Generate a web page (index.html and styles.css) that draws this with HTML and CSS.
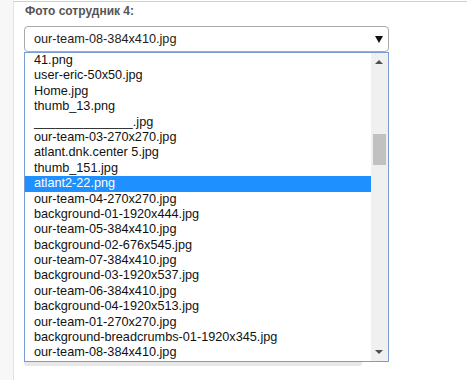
FILE: index.html
```html
<!DOCTYPE html>
<html lang="ru">
<head>
    <meta charset="UTF-8">
    <meta name="viewport" content="width=device-width, initial-scale=1.0">
    <title>Фото сотрудник</title>
    <link rel="stylesheet" href="styles.css">
</head>
<body><div class="page">
    <div class="sidebar"></div>

    <div class="main">
        <div class="field-label">Фото сотрудник 4:</div>

        <div class="select-box">
            <span class="select-value">our-team-08-384x410.jpg</span>
            <span class="select-arrow"></span>
        </div>

        <div class="dropdown">
            <ul class="options">
                <li>41.png</li>
                <li>user-eric-50x50.jpg</li>
                <li>Home.jpg</li>
                <li>thumb_13.png</li>
                <li>______________.jpg</li>
                <li>our-team-03-270x270.jpg</li>
                <li>atlant.dnk.center 5.jpg</li>
                <li>thumb_151.jpg</li>
                <li class="selected">atlant2-22.png</li>
                <li>our-team-04-270x270.jpg</li>
                <li>background-01-1920x444.jpg</li>
                <li>our-team-05-384x410.jpg</li>
                <li>background-02-676x545.jpg</li>
                <li>our-team-07-384x410.jpg</li>
                <li>background-03-1920x537.jpg</li>
                <li>our-team-06-384x410.jpg</li>
                <li>background-04-1920x513.jpg</li>
                <li>our-team-01-270x270.jpg</li>
                <li>background-breadcrumbs-01-1920x345.jpg</li>
                <li>our-team-08-384x410.jpg</li>
            </ul>
            <div class="scrollbar">
                <span class="arrow-up"></span>
                <span class="thumb"></span>
                <span class="arrow-down"></span>
            </div>
        </div>
        <div class="under-shadow"></div>
    </div>
</div>
</body>
</html>
```

FILE: styles.css
```css
* {
    margin: 0;
    padding: 0;
    box-sizing: border-box;
}
body {
    background: #fff;
    font-family: "Liberation Sans", Arial, sans-serif;
}
.page {
    display: flex;
    height: 380px;
}
.sidebar {
    width: 14px;
    background: #f7f7f7;
    border-right: 1px solid #e2e2e2;
}
.main {
    flex: 1;
    margin-top: 1px;
    border-top: 1px solid #cfcfcf;
    padding-left: 10px;
}
.field-label {
    margin-top: 2px;
    height: 22px;
    font-size: 12px;
    line-height: 14px;
    font-weight: bold;
    color: #555;
    padding-left: 1px;
}
.select-box {
    width: 365px;
    height: 26px;
    border: 1px solid #aaa;
    border-radius: 4px;
    display: flex;
    align-items: center;
    justify-content: space-between;
    padding: 0 5px 0 9px;
    font-size: 12.7px;
    color: #222;
}
.select-arrow {
    width: 0;
    height: 0;
    border-left: 4px solid transparent;
    border-right: 4px solid transparent;
    border-top: 7px solid #111;
    margin-top: 1px;
}
.dropdown {
    width: 365px;
    height: 310px;
    border: 1px solid #7a9bd4;
    display: flex;
    overflow: hidden;
}
.options {
    list-style: none;
    flex: 1;
    font-size: 12.7px;
    color: #111;
}
.options li {
    height: 15.4px;
    line-height: 15.4px;
    padding-left: 9px;
    white-space: nowrap;
}
.options li.selected {
    background: #1e90ff;
    color: #fff;
}
.scrollbar {
    width: 17px;
    background: #f0f0f0;
    position: relative;
}
.arrow-up, .arrow-down {
    position: absolute;
    left: 4px;
    width: 0;
    height: 0;
    border-left: 4px solid transparent;
    border-right: 4px solid transparent;
}
.arrow-up {
    top: 7px;
    border-bottom: 4px solid #505050;
}
.arrow-down {
    bottom: 7px;
    border-top: 4px solid #505050;
}
.thumb {
    position: absolute;
    left: 2px;
    top: 81px;
    width: 13px;
    height: 31px;
    background: #c1c1c1;
}
.under-shadow {
    width: 338px;
    height: 4px;
    background: #e8e8e8;
    border-radius: 0 0 3px 3px;
}
```
